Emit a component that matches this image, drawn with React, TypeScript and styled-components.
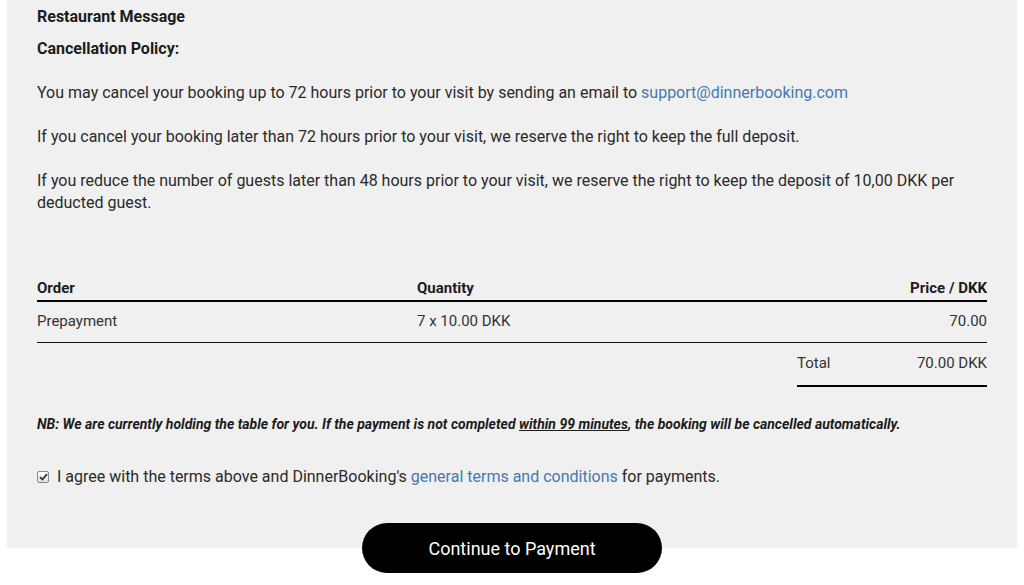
import React from "react";
import styled, { createGlobalStyle } from "styled-components";

const Global = createGlobalStyle`
  html, body { margin: 0; padding: 0; background: #ffffff; }
  body { font-family: Roboto, "Noto Sans", Arial, sans-serif; color: #262626; }
  * { box-sizing: border-box; }
`;

const Page = styled.div`
  width: 1024px;
  padding-left: 7px;
  padding-right: 7px;
`;

const Panel = styled.section`
  background: #f0f0f0;
  padding: 6px 30px 60px 30px;
`;

const Heading = styled.h3<{ $gap?: number }>`
  margin: 0;
  font-size: 16px;
  line-height: 22px;
  font-weight: 700;
  color: #1c1c1c;
  margin-bottom: ${(p) => p.$gap ?? 0}px;
`;

const Para = styled.p`
  margin: 0 0 22px 0;
  font-size: 16px;
  line-height: 22px;
  color: #2a2a2a;
`;

const Link = styled.a`
  color: #4579b0;
  text-decoration: none;
`;

const Table = styled.div`
  margin-top: 62px;
  display: grid;
  grid-template-columns: 380px 380px 190px;
  font-size: 15px;
  line-height: 20px;
`;

const HeadCell = styled.div<{ $right?: boolean }>`
  font-weight: 700;
  font-size: 15px;
  color: #1c1c1c;
  padding: 2px 0 2px 0;
  border-bottom: 2px solid #000;
  text-align: ${(p) => (p.$right ? "right" : "left")};
`;

const Cell = styled.div<{ $right?: boolean }>`
  padding: 9px 0 11px 0;
  border-bottom: 1px solid #111;
  color: #333;
  text-align: ${(p) => (p.$right ? "right" : "left")};
`;

const Spacer = styled.div`
  grid-column: span 2;
`;

const TotalCell = styled.div`
  display: flex;
  justify-content: space-between;
  padding: 10px 0 12px 0;
  border-bottom: 2px solid #000;
  color: #333;
`;

const Notice = styled.p`
  margin: 27px 0 0 0;
  font-size: 14px;
  line-height: 20px;
  font-weight: 700;
  font-style: italic;
  color: #1c1c1c;
`;

const Underlined = styled.span`
  text-decoration: underline;
`;

const AgreeRow = styled.label`
  margin-top: 32px;
  display: flex;
  align-items: center;
  gap: 8px;
  font-size: 16px;
  line-height: 22px;
  color: #2a2a2a;
`;

const Box = styled.span`
  width: 12px;
  height: 12px;
  border: 1px solid #8a8a8a;
  border-radius: 2px;
  background: linear-gradient(#fdfdfd, #e2e2e2);
  display: inline-flex;
  align-items: center;
  justify-content: center;
`;

const ButtonWrap = styled.div`
  display: flex;
  justify-content: center;
  margin-top: -25px;
`;

const PayButton = styled.button`
  width: 300px;
  height: 50px;
  border: none;
  border-radius: 25px;
  background: #000;
  color: #fff;
  font-family: Roboto, Arial, sans-serif;
  font-size: 18px;
  font-weight: 400;
  cursor: pointer;
`;

export default function App() {
  return (
    <Page>
      <Global />
      <Panel>
        <Heading $gap={10}>Restaurant Message</Heading>
        <Heading $gap={22}>Cancellation Policy:</Heading>
        <Para>
          You may cancel your booking up to 72 hours prior to your visit by sending an email to{" "}
          <Link href="#">support@dinnerbooking.com</Link>
        </Para>
        <Para>
          If you cancel your booking later than 72 hours prior to your visit, we reserve the right to keep the full deposit.
        </Para>
        <Para>
          If you reduce the number of guests later than 48 hours prior to your visit, we reserve the right to keep the deposit of 10,00 DKK per deducted guest.
        </Para>
        <Table>
          <HeadCell>Order</HeadCell>
          <HeadCell>Quantity</HeadCell>
          <HeadCell $right>Price / DKK</HeadCell>
          <Cell>Prepayment</Cell>
          <Cell>7 x 10.00 DKK</Cell>
          <Cell $right>70.00</Cell>
          <Spacer />
          <TotalCell>
            <span>Total</span>
            <span>70.00 DKK</span>
          </TotalCell>
        </Table>
        <Notice>
          NB: We are currently holding the table for you. If the payment is not completed{" "}
          <Underlined>within 99 minutes</Underlined>, the booking will be cancelled automatically.
        </Notice>
        <AgreeRow>
          <Box>
            <svg width="9" height="8" viewBox="0 0 9 8">
              <path d="M1 4.2 L3.4 6.5 L8 1.2" fill="none" stroke="#333" strokeWidth="1.8" />
            </svg>
          </Box>
          <span>
            I agree with the terms above and DinnerBooking's{" "}
            <Link href="#">general terms and conditions</Link> for payments.
          </span>
        </AgreeRow>
      </Panel>
      <ButtonWrap>
        <PayButton>Continue to Payment</PayButton>
      </ButtonWrap>
    </Page>
  );
}
